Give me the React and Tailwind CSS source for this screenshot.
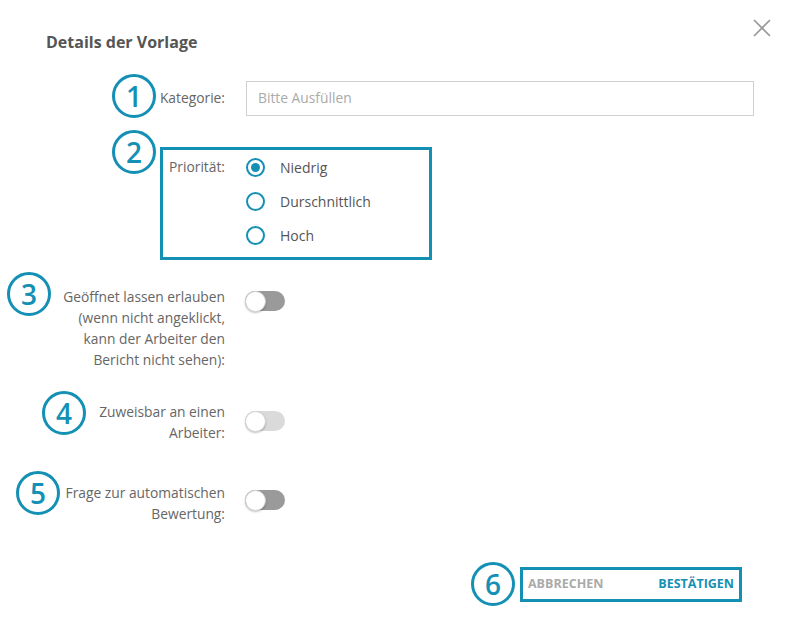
const TEAL = 'border-[#1590b5]';

function Num({ n, className = '' }) {
  return (
    <div
      className={`w-[44px] h-[44px] shrink-0 rounded-full border-[3px] ${TEAL} text-[#1590b5] flex items-center justify-center text-[28px] leading-none font-semibold ${className}`}
    >
      {n}
    </div>
  );
}

function Toggle({ disabled, className = '' }) {
  return (
    <div
      className={`w-[40px] h-[20px] rounded-full flex items-center ${disabled ? 'bg-[#dadada]' : 'bg-[#9a9a9a]'} ${className}`}
    >
      <span className="w-[21px] h-[21px] rounded-full bg-white border border-[#d4d4d4] shadow-[0_1px_2px_rgba(0,0,0,0.25)]" />
    </div>
  );
}

function Radio({ checked, label }) {
  return (
    <div className="h-[34px] flex items-center">
      <span className="w-[19px] h-[19px] rounded-full border-2 border-[#1590b5] flex items-center justify-center">
        {checked && <span className="w-[9px] h-[9px] rounded-full bg-[#1590b5]" />}
      </span>
      <span className="ml-[15px] text-[14px] text-[#555]">{label}</span>
    </div>
  );
}

export default function App() {
  return (
    <div className="w-[786px] h-[630px] bg-white font-['Open_Sans',sans-serif] text-[13.8px] text-[#666]">
      {/* Header */}
      <div className="flex items-start justify-between pl-[46px] pr-[15px]">
        <h2 className="mt-[32px] text-[16px] leading-[20px] font-bold text-[#555]">Details der Vorlage</h2>
        <button className="mt-[19px] text-[#999]">
          <svg width="18" height="18" viewBox="0 0 18 18" fill="none" stroke="currentColor" strokeWidth="1.7">
            <path d="M1 1L17 17M17 1L1 17" />
          </svg>
        </button>
      </div>

      {/* Kategorie */}
      <div className="mt-[24px] flex items-center h-[44px] pr-[32px]">
        <div className="w-[225px] flex items-center">
          <Num n="1" className="ml-[112px] mb-[5px]" />
          <span className="ml-auto">Kategorie:</span>
        </div>
        <div className="ml-[21px] flex-1 h-[35px] border border-[#d0d0d0] flex items-center px-[11px] text-[#aaa]">
          Bitte Ausfüllen
        </div>
      </div>

      {/* Priorität */}
      <div className="mt-[10px] flex items-start pl-[112px]">
        <Num n="2" />
        <div className={`ml-[4px] mt-[17px] w-[272px] border-[3px] ${TEAL} flex items-start pb-[5px]`}>
          <div className="w-[62px] h-[34px] flex items-center justify-end">Priorität:</div>
          <div className="ml-[21px]">
            <Radio checked label="Niedrig" />
            <Radio label="Durschnittlich" />
            <Radio label="Hoch" />
          </div>
        </div>
      </div>

      {/* Geöffnet lassen */}
      <div className="mt-[12px] flex items-start">
        <div className="w-[225px] flex items-start">
          <Num n="3" className="ml-[7px]" />
          <p className="ml-auto mt-[14px] text-right leading-[21px]">
            Geöffnet lassen erlauben
            <br />
            (wenn nicht angeklickt,
            <br />
            kann der Arbeiter den
            <br />
            Bericht nicht sehen):
          </p>
        </div>
        <Toggle className="ml-[20px] mt-[19px]" />
      </div>

      {/* Zuweisbar */}
      <div className="mt-[21px] flex items-start">
        <div className="w-[225px] flex items-start">
          <Num n="4" className="ml-[42px]" />
          <p className="ml-auto mt-[10px] text-right leading-[21px]">
            Zuweisbar an einen
            <br />
            Arbeiter:
          </p>
        </div>
        <Toggle disabled className="ml-[20px] mt-[20px]" />
      </div>

      {/* Frage */}
      <div className="mt-[28px] flex items-start">
        <div className="w-[225px] flex items-start">
          <Num n="5" className="ml-[16px]" />
          <p className="ml-auto mt-[11px] text-right leading-[21px]">
            Frage zur automatischen
            <br />
            Bewertung:
          </p>
        </div>
        <Toggle className="ml-[20px] mt-[19px]" />
      </div>

      {/* Actions */}
      <div className="mt-[38px] flex items-center justify-end pr-[44px]">
        <Num n="6" />
        <div className={`ml-[5px] w-[222px] h-[35px] border-[3px] ${TEAL} flex items-center justify-between px-[5px] text-[12.5px] font-bold`}>
          <button className="text-[#aaa]">ABBRECHEN</button>
          <button className="text-[#1590b5]">BESTÄTIGEN</button>
        </div>
      </div>
    </div>
  );
}
